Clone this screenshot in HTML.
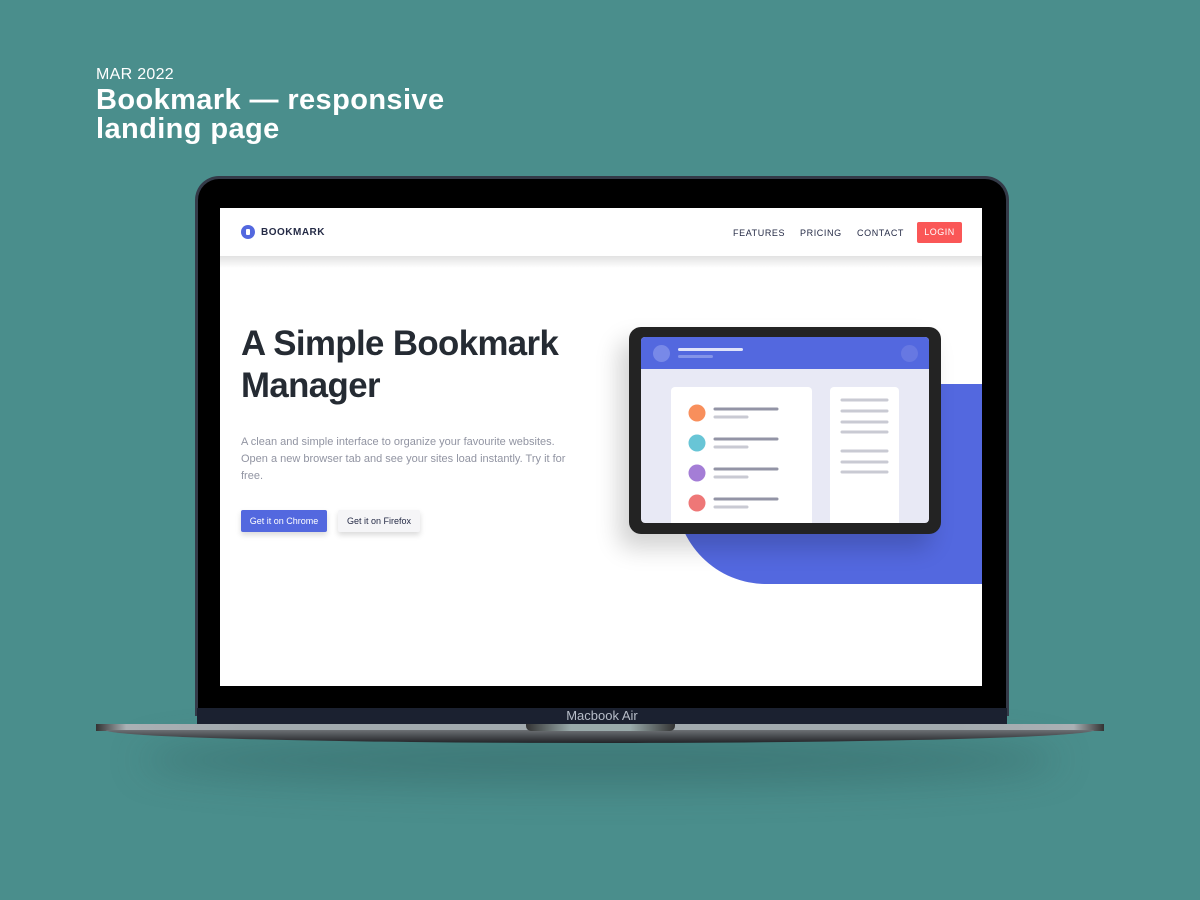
<!DOCTYPE html>
<html><head><meta charset="utf-8"><style>
*{margin:0;padding:0;box-sizing:border-box}
body{width:1200px;height:900px;background:#4a8e8c;position:relative;overflow:hidden;font-family:"Liberation Sans",sans-serif}
.a{position:absolute}
</style></head><body>
<div class="a" style="left:96px;top:66px;color:#fff;font-size:16px;letter-spacing:.3px">MAR 2022</div>
<div class="a" style="left:96px;top:86px;color:#fff;font-size:29px;font-weight:bold;line-height:29px;letter-spacing:.4px">Bookmark — responsive<br>landing page</div>
<div class="a" style="left:140px;top:735px;width:920px;height:50px;border-radius:50%;background:rgba(40,80,80,.35);filter:blur(18px)"></div>
<div class="a" style="left:195px;top:176px;width:814px;height:540px;border-radius:24px 24px 0 0;background:#343a48;padding:3px">
 <div style="width:100%;height:100%;background:#000;border-radius:21px 21px 0 0"></div></div>
<div class="a" style="left:197px;top:708px;width:810px;height:17px;background:#1b2130;color:#b7bdc8;font-size:13px;text-align:center;line-height:15px">Macbook Air</div>
<div class="a" style="left:96px;top:724px;width:1008px;height:7px;background:linear-gradient(90deg,#333 0,#aab0b4 3%,#a2aaae 15%,#a2aaae 85%,#aab0b4 97%,#333 100%)"></div>
<div class="a" style="left:106px;top:730px;width:988px;height:13px;background:linear-gradient(#6c7074,#222428);border-radius:0 0 50% 50%/0 0 100% 100%"></div>
<div class="a" style="left:526px;top:724px;width:149px;height:7px;border-radius:0 0 5px 5px;background:linear-gradient(90deg,#333,#9aa 30%,#9aa 70%,#333)"></div>
<div class="a" style="left:220px;top:208px;width:762px;height:478px;background:#fff;overflow:hidden">
 <div class="a" style="left:0;top:48px;width:762px;height:12px;background:linear-gradient(#e2e2e2,#fff)"></div>
 <div class="a" style="left:21px;top:17px;width:14px;height:14px;border-radius:50%;background:#5368df"></div>
 <div class="a" style="left:26px;top:21px;width:4px;height:6px;background:#fff;border-radius:1px"></div>
 <div class="a" style="left:41px;top:19px;font-size:10px;font-weight:bold;color:#252b46;letter-spacing:.5px">BOOKMARK</div>
 <div class="a" style="left:513px;top:20px;font-size:9px;color:#252b46;letter-spacing:.6px">FEATURES</div>
 <div class="a" style="left:580px;top:20px;font-size:9px;color:#252b46;letter-spacing:.6px">PRICING</div>
 <div class="a" style="left:637px;top:20px;font-size:9px;color:#252b46;letter-spacing:.6px">CONTACT</div>
 <div class="a" style="left:697px;top:14px;width:45px;height:21px;background:#fa5757;border-radius:2px;color:#fff;font-size:9px;text-align:center;line-height:21px;letter-spacing:.5px">LOGIN</div>
 <div class="a" style="left:21px;top:115px;font-size:34.8px;font-weight:bold;color:#252b33;line-height:42px;letter-spacing:-.6px">A Simple Bookmark<br>Manager</div>
 <div class="a" style="left:21px;top:226px;width:338px;font-size:11px;color:#9194a2;line-height:17px">A clean and simple interface to organize your favourite websites. Open a new browser tab and see your sites load instantly. Try it for free.</div>
 <div class="a" style="left:21px;top:302px;width:86px;height:22px;background:#5368df;border-radius:2px;color:#fff;font-size:9px;text-align:center;line-height:22px;box-shadow:0 3px 6px rgba(0,0,0,.15)">Get it on Chrome</div>
 <div class="a" style="left:118px;top:302px;width:82px;height:22px;background:#f5f5f7;border-radius:2px;color:#252b46;font-size:9px;text-align:center;line-height:22px;box-shadow:0 3px 6px rgba(0,0,0,.15)">Get it on Firefox</div>
 <div class="a" style="left:456px;top:176px;width:320px;height:200px;background:#5368df;border-radius:0 0 0 90px"></div>
 <div class="a" style="left:409px;top:119px;width:312px;height:207px;background:#232323;border-radius:12px;box-shadow:-10px 14px 24px rgba(0,0,0,.18)">
  <div class="a" style="left:12px;top:10px;width:288px;height:186px;background:#e8e9f5;border-radius:4px;overflow:hidden">
   <div class="a" style="left:0;top:0;width:288px;height:32px;background:#5368df"></div>
   <div class="a" style="left:12px;top:8px;width:17px;height:17px;border-radius:50%;background:#7889e8"></div>
   <div class="a" style="left:37px;top:11px;width:65px;height:3px;background:#dfe3fa;border-radius:2px"></div>
   <div class="a" style="left:37px;top:18px;width:35px;height:3px;background:#8494e9;border-radius:2px"></div>
   <div class="a" style="left:260px;top:8px;width:17px;height:17px;border-radius:50%;background:#6778e2"></div>
   <div class="a" style="left:30px;top:50px;width:141px;height:140px;background:#fff;border-radius:4px"></div>
   <div class="a" style="left:189px;top:50px;width:69px;height:140px;background:#fff;border-radius:4px"></div>
  </div>
 </div>
</div>
<svg class="a" style="left:0;top:0" width="1200" height="900">
 <g>
  <circle cx="697" cy="413" r="8.5" fill="#f88f5c"/><circle cx="697" cy="443" r="8.5" fill="#68c5d6"/>
  <circle cx="697" cy="473" r="8.5" fill="#a47dd6"/><circle cx="697" cy="503" r="8.5" fill="#ee7777"/>
 </g>
 <g stroke-linecap="round" stroke-width="3">
  <g stroke="#9394a6"><line x1="715" y1="409" x2="777" y2="409"/><line x1="715" y1="439" x2="777" y2="439"/><line x1="715" y1="469" x2="777" y2="469"/><line x1="715" y1="499" x2="777" y2="499"/></g>
  <g stroke="#c9cad3"><line x1="715" y1="417" x2="747" y2="417"/><line x1="715" y1="447" x2="747" y2="447"/><line x1="715" y1="477" x2="747" y2="477"/><line x1="715" y1="507" x2="747" y2="507"/>
  <line x1="842" y1="400" x2="887" y2="400"/><line x1="842" y1="411" x2="887" y2="411"/><line x1="842" y1="422" x2="887" y2="422"/><line x1="842" y1="432" x2="887" y2="432"/><line x1="842" y1="451" x2="887" y2="451"/><line x1="842" y1="462" x2="887" y2="462"/><line x1="842" y1="472" x2="887" y2="472"/></g>
 </g>
</svg>
</body></html>
